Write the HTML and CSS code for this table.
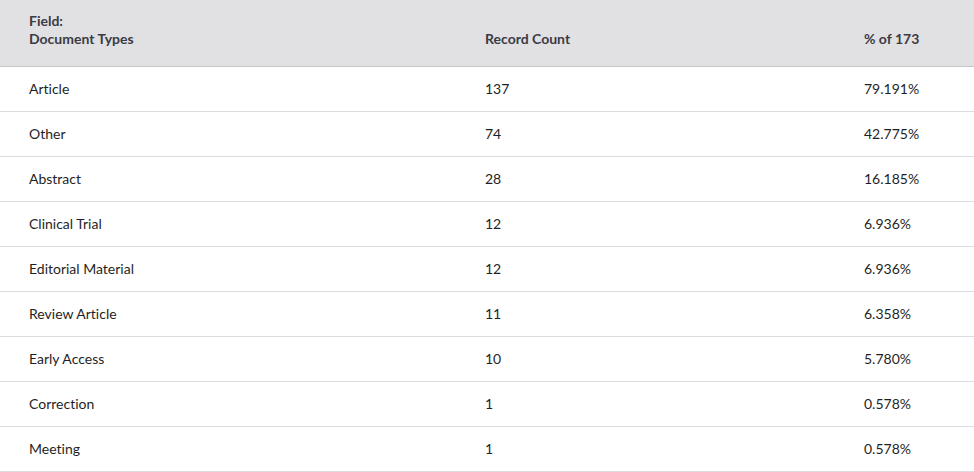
FILE: index.html
```html
<!DOCTYPE html>
<html>
<head>
<meta charset="utf-8">
<link rel="stylesheet" href="styles.css">
</head>
<body>
<div class="table">
  <div class="row head">
    <div class="cell">Field:<br>Document Types</div>
    <div class="cell">Record Count</div>
    <div class="cell">% of 173</div>
  </div>
  <div class="row"><div class="cell">Article</div><div class="cell">137</div><div class="cell">79.191%</div></div>
  <div class="row"><div class="cell">Other</div><div class="cell">74</div><div class="cell">42.775%</div></div>
  <div class="row"><div class="cell">Abstract</div><div class="cell">28</div><div class="cell">16.185%</div></div>
  <div class="row"><div class="cell">Clinical Trial</div><div class="cell">12</div><div class="cell">6.936%</div></div>
  <div class="row"><div class="cell">Editorial Material</div><div class="cell">12</div><div class="cell">6.936%</div></div>
  <div class="row"><div class="cell">Review Article</div><div class="cell">11</div><div class="cell">6.358%</div></div>
  <div class="row"><div class="cell">Early Access</div><div class="cell">10</div><div class="cell">5.780%</div></div>
  <div class="row"><div class="cell">Correction</div><div class="cell">1</div><div class="cell">0.578%</div></div>
  <div class="row"><div class="cell">Meeting</div><div class="cell">1</div><div class="cell">0.578%</div></div>
</div>
</body>
</html>
```
FILE: styles.css
```css
html, body {
  margin: 0;
  padding: 0;
  background: #ffffff;
}
body {
  font-family: Lato, "Noto Sans", "Liberation Sans", sans-serif;
  font-size: 14px;
  color: #1f1f26;
  font-variant-ligatures: none;
  font-feature-settings: "liga" 0, "clig" 0, "dlig" 0;
}
.table {
  width: 974px;
}
.row {
  display: grid;
  grid-template-columns: 456px 379px 1fr;
  padding-left: 29px;
  height: 44px;
  align-items: center;
  border-bottom: 1px solid #dcdcdf;
}
.row .cell {
  padding-bottom: 1px;
}
.row.head {
  height: 66px;
  background: #e1e1e4;
  border-bottom: 1px solid #c6c6ca;
  align-items: end;
  font-weight: 700;
  color: #3b3b44;
}
.row.head .cell {
  line-height: 18px;
  padding-bottom: 18px;
}
```
